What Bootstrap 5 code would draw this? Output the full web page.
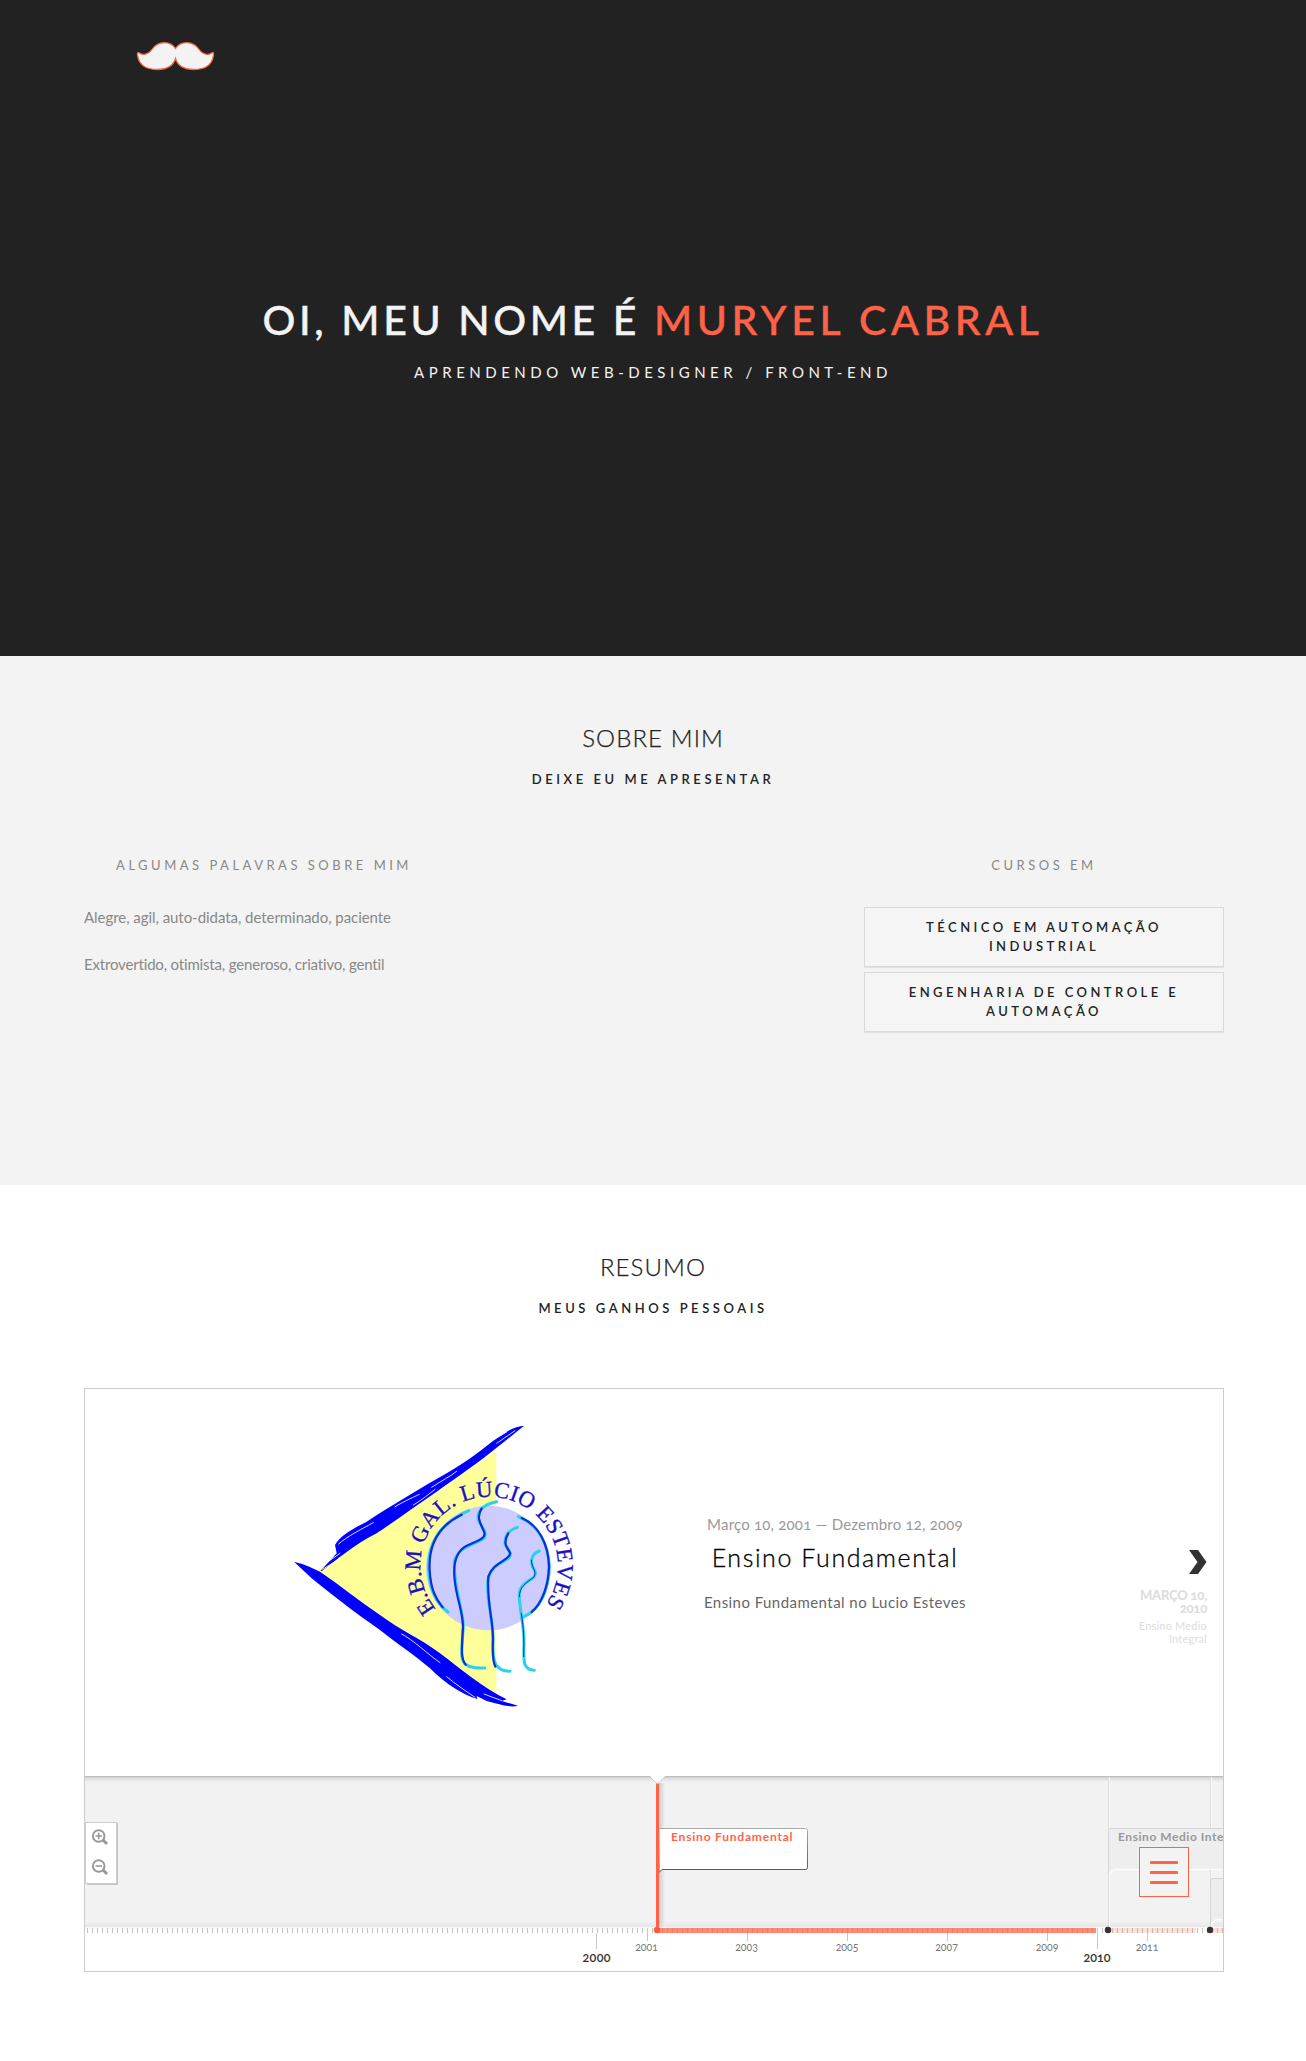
<!DOCTYPE html>
<html lang="pt-br">
<head>
<meta charset="utf-8">
<meta name="viewport" content="width=device-width, initial-scale=1">
<title>Muryel Cabral</title>
<link href="https://cdn.jsdelivr.net/npm/bootstrap@5.3.0/dist/css/bootstrap.min.css" rel="stylesheet">
<style>
body{font-family:Lato,"Open Sans",sans-serif;color:#222;background:#fff;font-variant-numeric:oldstyle-nums;overflow-x:hidden}
.wrap{width:1140px;margin-left:84px}
.hero{height:656px;background:#222;color:#f3f3f3}
.logo-row{height:295px;padding:30px 0 0 36px}
.hero h1{font-size:41px;line-height:50px;letter-spacing:3.6px;font-weight:500;-webkit-text-stroke:.4px currentColor;margin-bottom:15px;white-space:nowrap}
.tomato{color:#ff6347;letter-spacing:4.6px}
.hero-sub{font-size:15px;line-height:24px;letter-spacing:4.5px;margin:0}
.about{background:#f3f3f3;height:529px;padding-top:67px}
.resume{padding-top:67px;height:876px}
.sec-title{font-size:24px;line-height:30px;letter-spacing:1.1px;font-weight:300;-webkit-text-stroke:.25px currentColor;margin-bottom:16px}
.sec-sub{font-size:13px;line-height:20px;letter-spacing:3.55px;font-weight:600;margin:0}
.cols{margin-top:66px}
.col-head{font-size:13px;line-height:20px;letter-spacing:3.5px;color:#888;font-weight:400;margin-bottom:32px;text-align:center}
.side{width:360px}
.words{font-size:15px;line-height:20px;color:#888;margin-bottom:27px;letter-spacing:-.05px}
.words + .words{letter-spacing:-.17px}
.course{height:60px;border:1px solid #d9d9d9;border-radius:0;background:#f5f5f5;box-shadow:0 1px 0 #e2e2e2;padding:10px 15px 0;margin-bottom:5px;font-size:13px;line-height:19px;letter-spacing:3.45px;font-weight:600;text-align:center}
.timeline{margin-top:70px;height:584px;border:1px solid #ccc}
.slide-area{height:387px;padding-left:195px}
.slide-img{margin-top:21px}
.slide-text{width:400px;margin-left:45px;padding-top:125px}
.slide-date{font-size:15px;line-height:20px;color:#999;letter-spacing:.2px}
.slide-title{font-size:25px;line-height:30px;font-weight:300;-webkit-text-stroke:.3px currentColor;color:#000;letter-spacing:1.6px;margin:8px 0 20px}
.slide-body{font-size:15px;line-height:20px;color:#666;margin:0;letter-spacing:.45px}
.next{width:80px;margin-right:16px;padding-top:161px;color:#ddd;text-align:right}
.next-date{font-size:13px;line-height:13px;font-weight:900;letter-spacing:-.2px;margin-top:15px;margin-bottom:4px}
.next-name{font-size:11px;line-height:13px;letter-spacing:.2px}
.axis-font{font-family:Lato,sans-serif}
.menu-btn{position:fixed;left:1139px;top:1847px;width:50px;height:50px;border:1px solid #ff6347;border-radius:0;background:#f3f3f3;gap:7px}
.menu-btn span{width:28px;height:3px;border-radius:1px;background:#ff6347}
</style>
</head>
<body>
<header class="hero">
  <div class="wrap logo-row">
    <svg class="d-block" width="110" height="50" viewBox="0 0 110 50"><path d="M55.5 18.500C50 10.500 38 10.500 31.500 20C28.500 24.500 22.500 25.500 19.500 23C17.500 22 17.300 23 17.500 25C19 36.500 28 39.500 37 39.500C47 39.500 53.500 35 55.500 28.500C57.500 35 64 39.500 74 39.500C83 39.500 92 36.500 93.500 25C93.700 23 93.500 22 91.500 23C88.500 25.500 82.500 24.500 79.500 20C73 10.500 61 10.500 55.500 18.500Z" fill="#f3f3f3" stroke="#ff6347" stroke-width="1.300"/></svg>
  </div>
  <div class="text-center">
    <h1>OI, MEU NOME É <span class="tomato">MURYEL CABRAL</span></h1>
    <p class="hero-sub">APRENDENDO WEB-DESIGNER / FRONT-END</p>
  </div>
</header>

<section class="about">
  <div class="text-center">
    <h3 class="sec-title">SOBRE MIM</h3>
    <h5 class="sec-sub">DEIXE EU ME APRESENTAR</h5>
  </div>
  <div class="wrap cols d-flex justify-content-between">
    <div class="side">
      <h5 class="col-head">ALGUMAS PALAVRAS SOBRE MIM</h5>
      <p class="words">Alegre, agil, auto-didata, determinado, paciente</p>
      <p class="words">Extrovertido, otimista, generoso, criativo, gentil</p>
    </div>
    <div class="side">
      <h5 class="col-head">CURSOS EM</h5>
      <div class="course">TÉCNICO EM AUTOMAÇÃO<br>INDUSTRIAL</div>
      <div class="course">ENGENHARIA DE CONTROLE E<br>AUTOMAÇÃO</div>
    </div>
  </div>
</section>

<section class="resume">
  <div class="text-center">
    <h3 class="sec-title">RESUMO</h3>
    <h5 class="sec-sub">MEUS GANHOS PESSOAIS</h5>
  </div>
  <div class="wrap timeline">
    <div class="slide-area d-flex">
      <svg class="slide-img flex-shrink-0" width="310" height="310" viewBox="0 0 930 930">
        <path d="M110 482L215 410L430 275L649 122V850L540 790L330 640Z" fill="#ff9"/>
        <circle cx="625" cy="474" r="187" fill="#ccf"/>
        <g fill="#00f">
          <path d="M122 482L170 430L165 405C180 380 200 366 260 335C330 290 420 235 500 190C570 150 610 115 650 85C680 62 710 48 732 48C715 60 690 82 660 105C600 155 540 195 470 245C410 285 350 330 290 370C220 405 170 450 125 484Z"/>
          <path d="M42 455C70 462 90 470 120 485C180 525 240 575 300 615C360 660 420 685 480 730C540 775 610 835 680 868L665 873L714 887C690 895 650 880 620 873L590 858L592 867C550 855 500 825 450 775C410 740 350 700 300 660C220 605 150 550 95 505Z"/>
        </g>
        <g fill="none" stroke="#fff" stroke-width="2.500" stroke-linecap="round">
          <path d="M176 402C200 380 240 360 280 338M345 290C380 270 400 262 418 253M400 285C425 270 450 250 465 238M455 232C485 212 510 200 530 184M130 465L180 430M128 478L185 442M650 100L705 62M640 90L680 66M365 672C400 690 440 730 480 758M500 800C530 825 560 845 585 862M612 852L665 872"/>
        </g>
        <g fill="none" stroke-linecap="round" stroke-linejoin="round">
          <g stroke="#2bd0ee" stroke-width="9">
            <path d="M566 302C480 340 442 400 446 480C450 545 470 580 504 606M715 320C775 345 805 400 808 470C806 540 780 600 733 619"/>
            <path d="M650 275C600 285 590 310 596 332C605 350 620 362 614 382C590 405 535 405 523 455C520 530 548 590 550 650C545 720 540 745 555 762C570 774 590 774 614 774"/>
            <path d="M712 352C680 362 672 385 676 405C685 420 696 430 688 442C668 460 630 465 623 515C620 580 640 630 639 690C637 745 640 785 690 784"/>
            <path d="M778 423C752 433 752 455 758 472C768 485 770 492 760 503C735 518 715 530 718 560C720 610 733 650 732 700C730 760 730 778 763 781"/>
          </g>
          <g stroke="#0a2fd6" stroke-width="6.500">
            <path d="M545 314C480 345 445 400 449 480C452 535 465 565 488 592M725 324C775 345 805 400 807 470C805 530 785 580 755 606"/>
            <path d="M605 295C590 320 598 335 610 360C625 385 595 390 555 410C525 430 519 465 524 510C530 570 548 600 549 650C545 720 542 745 557 764"/>
            <path d="M685 370C665 405 685 415 691 430C685 455 640 455 625 500C620 580 640 630 639 690C637 735 640 760 646 770"/>
            <path d="M754 450C755 475 770 480 763 500C740 518 718 530 718 560M724 610C732 660 732 690 731 740" stroke-width="3"/>
          </g>
        </g>
        <path id="arc" d="M468 597A206 206 0 1 1 791 592" fill="none"/>
        <text font-family="Liberation Serif, serif" font-size="68" fill="#1a10c0" stroke="#1a10c0" stroke-width="1"><textPath href="#arc" textLength="912" lengthAdjust="spacing">E.B.M GAL. LÚCIO ESTEVES</textPath></text>
      </svg>
      <div class="slide-text text-center">
        <div class="slide-date">Março 10, 2001 — Dezembro 12, 2009</div>
        <h3 class="slide-title">Ensino Fundamental</h3>
        <p class="slide-body">Ensino Fundamental no Lucio Esteves</p>
      </div>
      <div class="next ms-auto">
        <svg class="d-block ms-auto" width="19" height="24" viewBox="0 0 19 24"><path d="M1 0H10L18.500 12L10 24H1L9.500 12Z" fill="#333"/></svg>
        <div class="next-date">MARÇO 10,<br>2010</div>
        <div class="next-name">Ensino Medio<br>Integral</div>
      </div>
    </div>
    <svg class="d-block axis-font" width="1138" height="195" viewBox="85 1776 1138 195">
      <defs>
        <linearGradient id="topShade" x2="0" y2="1"><stop stop-color="#b4b4b4"/><stop offset=".3" stop-color="#dadada"/><stop offset="1" stop-color="#f2f2f2"/></linearGradient>
        <linearGradient id="lowShade" x2="0" y2="1"><stop stop-color="#f2f2f2"/><stop offset="1" stop-color="#e6e6e6"/></linearGradient>
        <linearGradient id="rowShade" x2="0" y2="1"><stop stop-color="#f7f7f7"/><stop offset="1" stop-color="#fff"/></linearGradient>
        <linearGradient id="poleShade"><stop stop-color="#ccc"/><stop offset="1" stop-color="#f2f2f2"/></linearGradient>
        <linearGradient id="flagEdge" x2="0" y2="1"><stop stop-color="#aaa"/><stop offset="1" stop-color="#555"/></linearGradient>
        <pattern id="ticks" x="87" y="1927" width="5" height="6" patternUnits="userSpaceOnUse"><rect width="1" height="6" fill="#c4c4c4"/></pattern>
        <pattern id="barTicks" x="87" y="1927" width="5" height="6" patternUnits="userSpaceOnUse"><rect width="1" height="6" fill="#f07c68"/></pattern>
      </defs>
      <rect x="85" y="1776" width="1138" height="151" fill="#f2f2f2"/>
      <rect x="85" y="1776" width="1138" height="6" fill="url(#topShade)"/>
      <rect x="85" y="1921" width="1138" height="6" fill="url(#lowShade)"/>
      <rect x="85" y="1927" width="1138" height="6" fill="url(#rowShade)"/>
      <!-- later events -->
      <path d="M1108.500 1777V1927M1210.500 1777V1927" stroke="#dcdcdc"/>
      <path d="M1109.500 1777V1927M1211.500 1777V1927" stroke="#fafafa"/>
      <path d="M1108.500 1873V1831Q1108.500 1828.500 1111 1828.500H1224V1869.500H1114Z" fill="#eee"/>
      <path d="M1108.500 1873V1831Q1108.500 1828.500 1111 1828.500H1224" fill="none" stroke="#d5d5d5"/>
      <path d="M1109.500 1873.500L1114 1869.500H1224" fill="none" stroke="#fcfcfc" stroke-width="1.500"/>
      <path d="M1210.500 1923V1881Q1210.500 1878.500 1213 1878.500H1224V1919.500H1216Z" fill="#ededed"/>
      <path d="M1210.500 1923V1881Q1210.500 1878.500 1213 1878.500H1224" fill="none" stroke="#d5d5d5"/>
      <path d="M1211.500 1923.500L1216 1919.500H1224" fill="none" stroke="#fcfcfc" stroke-width="1.500"/>
      <text x="1118" y="1841" font-size="12" font-weight="700" fill="#999" letter-spacing=".55">Ensino Medio Inte</text>
      <!-- current event -->
      <rect x="659" y="1783" width="6" height="144" fill="url(#poleShade)"/>
      <path d="M659 1828.500H805.500Q807.500 1828.500 807.500 1830.500V1867.500Q807.500 1869.500 805.500 1869.500H662L659 1872.500Z" fill="#fff" stroke="url(#flagEdge)"/>
      <path d="M656 1776H659V1927H656Z" fill="#ff6347"/>
      <path d="M649 1776H666L657.500 1784Z" fill="#fff" stroke="#bbb" stroke-width=".8"/>
      <path d="M649.500 1775H665.500L657.500 1783.500Z" fill="#fff"/>
      <text x="671" y="1841" font-size="12" font-weight="700" fill="#ff6347" letter-spacing=".8">Ensino Fundamental</text>
      <!-- scale -->
      <rect x="85" y="1928" width="1138" height="5" fill="url(#ticks)"/>
      <rect x="657" y="1928" width="439" height="5" fill="#ff8a75"/>
      <rect x="657" y="1928" width="439" height="5" fill="url(#barTicks)"/>
      <path d="M1108 1928H1196V1933H1108ZM1210 1928H1223V1933H1210Z" fill="#ff6347" fill-opacity=".18"/>
      <circle cx="657" cy="1930" r="3.200" fill="#ff5a40"/>
      <circle cx="1108" cy="1930" r="3.200" fill="#3a3232"/><circle cx="1210" cy="1930" r="3.200" fill="#3a3232"/>
      <path d="M596.500 1933V1949M1097.500 1928V1949M647.500 1928V1941M747.500 1933V1941M847.500 1933V1941M947.500 1933V1941M1047.500 1933V1941M1147.500 1933V1941" stroke="#c8c8c8"/>
      <g font-size="10.500" fill="#777" text-anchor="middle"><text x="646.500" y="1950.500">2001</text><text x="746.500" y="1950.500">2003</text><text x="847" y="1950.500">2005</text><text x="946.500" y="1950.500">2007</text><text x="1047" y="1950.500">2009</text><text x="1147" y="1950.500">2011</text></g>
      <g font-size="12.500" font-weight="600" fill="#333" text-anchor="middle"><text x="596.500" y="1962" textLength="28">2000</text><text x="1097" y="1962">2010</text></g>
      <!-- zoom controls -->
      <rect x="87" y="1823" width="31" height="62" fill="#c6c6c6"/>
      <rect x="85.500" y="1822.500" width="31" height="61" fill="#fff" stroke="#ccc"/>
      <g fill="none" stroke="#999" stroke-width="2"><circle cx="98.700" cy="1836" r="5.800"/><path d="M103 1840L107 1844" stroke-width="3"/><path d="M95.500 1836H102M98.700 1832.800V1839.200" stroke-width="1.600"/><circle cx="98.700" cy="1866" r="5.800"/><path d="M103 1870L107 1874" stroke-width="3"/><path d="M95.500 1866H102" stroke-width="1.600"/></g>
    </svg>
  </div>
</section>

<button class="menu-btn btn p-0 d-flex flex-column align-items-center justify-content-center" aria-label="Menu"><span></span><span></span><span></span></button>
<script src="https://cdn.jsdelivr.net/npm/bootstrap@5.3.0/dist/js/bootstrap.bundle.min.js"></script>
</body>
</html>
